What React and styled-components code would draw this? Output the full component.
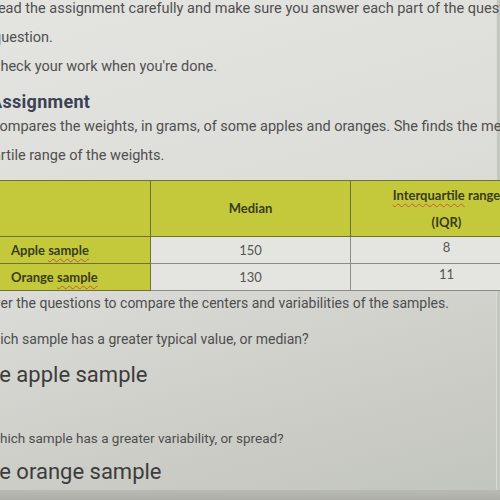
import React from "react";
import styled, { createGlobalStyle } from "styled-components";

const Global = createGlobalStyle`
  html, body { margin: 0; padding: 0; }
  body { width: 500px; height: 500px; overflow: hidden; background: #d4d4d0; }
`;

const Screen = styled.div`
  position: relative;
  width: 500px;
  height: 500px;
  overflow: hidden;
  display: flex;
  flex-direction: column;
  background: linear-gradient(165deg, #e4e4e0 0%, #dcdcd8 45%, #cbccc6 80%, #c2c4be 100%);
  box-shadow: inset -3px 0 0 #c4c6c0, inset -4px 0 0 #dadad6;
  font-family: Roboto, "Noto Sans", sans-serif;
`;

const Content = styled.div`
  flex: 1;
  min-height: 0;
  display: flex;
  flex-direction: column;
  margin-top: -6px;
`;

const Intro = styled.div`
  font-size: 14.5px;
  line-height: 29px;
  color: #505050;
  white-space: nowrap;
  margin-left: ${(p) => p.$shift}px;
`;

const Heading = styled.h2`
  margin: 11px 0 0 ${(p) => p.$shift}px;
  font-size: 18px;
  line-height: 20px;
  letter-spacing: 0.3px;
  font-weight: 700;
  color: #3c4156;
  white-space: nowrap;
`;

const Table = styled.table`
  margin: 10px 0 0 -10px;
  border-collapse: collapse;
  table-layout: fixed;
  width: 552px;
  font-family: Lato, "Liberation Sans", sans-serif;
  font-size: 13px;
`;

const Col = styled.col`
  width: ${(p) => p.$w}px;
`;

const HeadCell = styled.th`
  height: 55px;
  padding: 0 4px;
  background: #c3c93b;
  border: 1px solid #6e7236;
  color: #3b3c1c;
  font-weight: 700;
  text-align: center;
  vertical-align: middle;
  line-height: 27px;
`;

const LabelCell = styled.th`
  height: 26px;
  padding: 0 0 0 20px;
  background: #c3c93b;
  border: 1px solid #6e7236;
  color: #3b3c1c;
  font-weight: 700;
  text-align: left;
  white-space: nowrap;
  line-height: 16px;
`;

const ValueCell = styled.td`
  height: ${(p) => (p.$raise ? 20 : 26)}px;
  padding: 0 0 ${(p) => (p.$raise ? 6 : 0)}px;
  background: #e4e5e1;
  border: 1px solid #8c8c88;
  color: #555552;
  text-align: center;
  line-height: 16px;
`;

const Misspelled = styled.span`
  text-decoration: underline wavy #d0553a;
  text-decoration-thickness: 1px;
  text-underline-offset: 3px;
`;

const Prompt = styled.div`
  margin: ${(p) => p.$gap}px 0 0 ${(p) => p.$shift}px;
  font-size: ${(p) => p.$size}px;
  line-height: 24px;
  color: #4e4e4e;
  white-space: nowrap;
`;

const Answer = styled.div`
  margin: ${(p) => p.$gap}px 0 0 ${(p) => p.$shift}px;
  font-size: 22px;
  line-height: 30px;
  color: #3c3c3c;
  white-space: nowrap;
`;

const BottomBar = styled.div`
  height: 10px;
  flex: none;
  background: linear-gradient(180deg, #b9bab4 0%, #adaea8 100%);
`;

const rows = [
  { label: "Apple", median: 150, iqr: 8 },
  { label: "Orange", median: 130, iqr: 11 },
];

export default function App() {
  return (
    <>
      <Global />
      <Screen>
        <Content>
          <Intro $shift={-11}>Read the assignment carefully and make sure you answer each part of the question.</Intro>
          <Intro $shift={-7}>question.</Intro>
          <Intro $shift={-9}>Check your work when you're done.</Intro>
          <Heading $shift={-10}>Assignment</Heading>
          <Intro $shift={-36}>She compares the weights, in grams, of some apples and oranges. She finds the median and the</Intro>
          <Intro $shift={-52}>interquartile range of the weights.</Intro>
          <Table>
            <colgroup>
              <Col $w={160} />
              <Col $w={200} />
              <Col $w={192} />
            </colgroup>
            <thead>
              <tr>
                <HeadCell />
                <HeadCell>Median</HeadCell>
                <HeadCell>
                  <Misspelled>Interquartile</Misspelled> range
                  <br />
                  (IQR)
                </HeadCell>
              </tr>
            </thead>
            <tbody>
              {rows.map((r) => (
                <tr key={r.label}>
                  <LabelCell>
                    {r.label} <Misspelled>sample</Misspelled>
                  </LabelCell>
                  <ValueCell>{r.median}</ValueCell>
                  <ValueCell $raise>{r.iqr}</ValueCell>
                </tr>
              ))}
            </tbody>
          </Table>
          <Prompt $gap={0} $shift={-34} $size={14}>Answer the questions to compare the centers and variabilities of the samples.</Prompt>
          <Prompt $gap={12} $shift={-20} $size={14}>Which sample has a greater typical value, or median?</Prompt>
          <Answer $gap={9} $shift={-26}>The apple sample</Answer>
          <Prompt $gap={36} $shift={-12} $size={13.5}>Which sample has a greater variability, or spread?</Prompt>
          <Answer $gap={7} $shift={-26}>The orange sample</Answer>
        </Content>
        <BottomBar />
      </Screen>
    </>
  );
}
